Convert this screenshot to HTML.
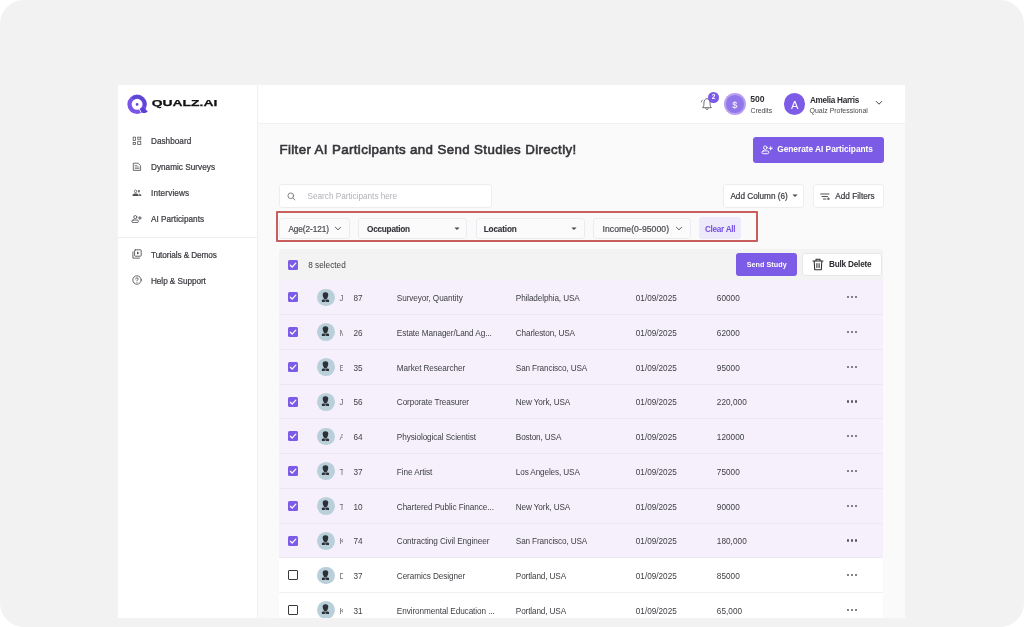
<!DOCTYPE html>
<html lang="en">
<head>
<meta charset="utf-8">
<title>Qualz.AI - AI Participants</title>
<style>
*{box-sizing:border-box;margin:0;padding:0}
html,body{width:1024px;height:627px;overflow:hidden;background:#fff}
body{font-family:"Liberation Sans",sans-serif;color:#3a3a3f;font-size:8.2px}
.stage{position:absolute;left:0;top:0;width:1024px;height:627px;background:#f2f2f2;border-radius:24px;overflow:hidden}
.app{position:absolute;left:118px;top:85px;width:787.4px;height:533px;background:#fafafa;overflow:hidden}
.o{position:absolute;left:-118px;top:-85px;width:1024px;height:627px;will-change:transform}
.side{position:absolute;left:118px;top:85px;width:139.7px;height:533px;background:#fff;border-right:1px solid #f0f0f0}
.top{position:absolute;left:257.7px;top:85px;width:648px;height:38.8px;background:#fff;border-bottom:1px solid #f0f0f0}
.abs{position:absolute}
.sdiv{position:absolute;left:118px;top:236.6px;width:139px;height:1px;background:#efefef}
h1{position:absolute;font-weight:700;color:#34343a;line-height:16px;white-space:nowrap}
.btn{position:absolute;border-radius:3px;white-space:nowrap}
.box{position:absolute;background:#fff;border:1px solid #ededf0;border-radius:3px}
.pill{position:absolute;background:#fbfbfb;border:1px solid #ececf0;border-radius:3px}
.t{position:absolute;white-space:nowrap;line-height:10px}
.row{position:absolute;left:279.2px;width:604.3px}
.row.sel{background:#f5f0fc;border-bottom:1px solid #ece7f3}
.row.un{background:#fff;border-bottom:1px solid #f1f1f1}
.cb{position:absolute;width:10px;height:10px;border-radius:1.5px;background:#7c5be6}
.cb svg{position:absolute;left:0;top:0}
.cb.off{background:#fff;border:1.2px solid #3a3a3f;border-radius:1px}
.av{position:absolute;width:17.8px;height:17.8px;border-radius:50%;background:#b9d0db;overflow:hidden}
.dot{position:absolute;width:2.1px;height:2.1px;border-radius:50%;background:#5a5a60}
</style>
</head>
<body>
<div class="stage">
<div class="app"><div class="o">
<div class="side"></div>
<div class="top"></div>
<div class="sdiv"></div>
<svg class="abs" style="left:125px;top:92px" width="26" height="24" viewBox="0 0 26 24">
<circle cx="12.1" cy="12.3" r="7.6" fill="none" stroke="#7b55e8" stroke-width="4.3"/>
<path d="M7.9 6.4 A7.4 7.4 0 0 1 19.3 14.6" fill="none" stroke="#5c46d2" stroke-width="3.4"/>
<path d="M14.8 16.7 L18.2 14.8 L22.8 19.500 L20.400 21 L17.500 20.900 Z" fill="#5a3fd6"/>
<path d="M13.900 16.100 L16.200 20.800" stroke="#fff" stroke-width="0.8" fill="none"/>
<circle cx="12.1" cy="12.4" r="1.35" fill="#6b41e0"/>
</svg>
<svg class="abs" style="left:150px;top:96px" width="72" height="16" viewBox="0 0 72 16">
<text x="1.7" y="10.4" font-family="Liberation Sans, sans-serif" font-weight="700" font-size="9.2" fill="#131316" stroke="#131316" stroke-width="0.25" textLength="65.6" lengthAdjust="spacingAndGlyphs">QUALZ.AI</text>
</svg>
<svg class="abs" style="left:132px;top:136px" width="10" height="10" viewBox="0 0 10 10" ><g fill="none" stroke="#4b4b52" stroke-width="0.75"><rect x="1.15" y="1.15" width="2.4" height="3.3"/><rect x="5.75" y="1.15" width="3.05" height="2.1"/><rect x="1.15" y="6.45" width="2.4" height="2.1"/><rect x="5.75" y="5.25" width="3.05" height="3.3"/></g></svg>
<svg class="abs" style="left:132px;top:162px" width="10" height="10" viewBox="0 0 10 10" ><g fill="none" stroke="#4b4b52" stroke-width="0.85" stroke-linejoin="round" stroke-linecap="round"><path d="M1.7 1.2h4.3l2.6 2.5v4.7h-6.9z" stroke-width="0.8"/><path d="M3.1 3.6h1.9M3.1 5.1h4M3.1 6.6h4" stroke-width="0.65"/></g></svg>
<svg class="abs" style="left:132px;top:189px" width="10" height="8" viewBox="0 0 10 8" ><circle cx="3.6" cy="2.3" r="1.25" fill="none" stroke="#505057" stroke-width="0.75"/><path d="M6.2 1h1.5v2.1l-0.75 0.7-0.75-0.7z" fill="#505057"/><path d="M0.5 7.1v-0.7c0-1.2 1.5-1.8 3.1-1.8s3.1 0.6 3.1 1.8v0.7z" fill="#505057"/><path d="M6.9 4.7c1.3 0.1 2.4 0.7 2.4 1.7v0.7h-1.9v-0.7c0-0.7-0.2-1.2-0.5-1.700z" fill="#505057"/></svg>
<svg class="abs" style="left:131.4px;top:215px" width="11" height="8.4" viewBox="0 0 11 8.4" ><g fill="none" stroke="#4b4b52" stroke-width="0.85" stroke-linejoin="round" stroke-linecap="round"><circle cx="4.3" cy="2.1" r="1.55"/><rect x="0.85" y="5.05" width="6.5" height="2.55" rx="1.25"/><path d="M8.9 1.6v2.800M7.500 3h2.800" stroke-width="0.95"/></g></svg>
<svg class="abs" style="left:131.6px;top:249px" width="10" height="10" viewBox="0 0 10 10" ><g fill="none" stroke="#4b4b52" stroke-width="0.85" stroke-linejoin="round" stroke-linecap="round"><rect x="2.6" y="0.8" width="6.6" height="6.4" rx="0.7"/><path d="M0.9 2.8v6.300h6.600"/></g><path d="M5 2.500l2.300 1.500-2.300 1.500z" fill="#4b4b52"/></svg>
<svg class="abs" style="left:131.6px;top:275.3px" width="10" height="10" viewBox="0 0 10 10" ><g fill="none" stroke="#4b4b52" stroke-width="0.85" stroke-linejoin="round" stroke-linecap="round"><circle cx="5" cy="5" r="4.200"/><path d="M3.800 4c0-0.800 0.500-1.200 1.200-1.200s1.200 0.500 1.200 1.100c0 0.900-1.200 0.900-1.200 1.900" stroke-width="0.85"/></g><circle cx="5" cy="7.300" r="0.500" fill="#4b4b52"/></svg>
<div class="t" style="left:151.00px;top:136.75px;font-size:8.2px;color:#3b3b41;letter-spacing:0.02px;-webkit-text-stroke:0.22px currentColor;">Dashboard</div>
<div class="t" style="left:151.00px;top:162.75px;font-size:8.2px;color:#3b3b41;letter-spacing:0.02px;-webkit-text-stroke:0.22px currentColor;">Dynamic Surveys</div>
<div class="t" style="left:151.00px;top:188.75px;font-size:8.2px;color:#3b3b41;letter-spacing:0.15px;-webkit-text-stroke:0.22px currentColor;">Interviews</div>
<div class="t" style="left:151.00px;top:214.75px;font-size:8.2px;color:#3b3b41;letter-spacing:0.02px;-webkit-text-stroke:0.22px currentColor;">AI Participants</div>
<div class="t" style="left:151.00px;top:250.75px;font-size:8.2px;color:#3b3b41;letter-spacing:-0.07px;-webkit-text-stroke:0.22px currentColor;">Tutorials &amp; Demos</div>
<div class="t" style="left:151.00px;top:276.75px;font-size:8.2px;color:#3b3b41;letter-spacing:-0.05px;-webkit-text-stroke:0.22px currentColor;">Help &amp; Support</div>
<svg class="abs" style="left:699px;top:96px" width="14" height="15" viewBox="0 0 14 15" ><g fill="none" stroke="#45454b" stroke-width="0.8" stroke-linecap="round" stroke-linejoin="round"><path d="M3.900 11.400c1-1.100 1-2.600 1-4.200 0-2.700 1.300-4.500 3.100-4.500s3.100 1.800 3.100 4.500c0 1.600 0 3.100 1 4.200z"/><path d="M6.800 12.500c0.200 0.700 0.600 1.100 1.200 1.100s1-0.400 1.200-1.100"/><path d="M2.300 6c0.200-0.800 0.600-1.500 1.200-2" stroke-width="0.65"/></g></svg>
<div class="abs" style="left:708.2px;top:92.4px;width:10.6px;height:10.6px;border-radius:50%;background:#7c5be6;color:#fff;font-size:6.6px;font-weight:700;line-height:10.6px;text-align:center">2</div>
<div class="abs" style="left:724.1px;top:93.2px;width:21.8px;height:21.8px;border-radius:50%;background:#b7a1f1"></div>
<div class="abs" style="left:726.3px;top:95.4px;width:17.4px;height:17.4px;border-radius:50%;background:#9277ea"></div>
<div class="t" style="left:732.30px;top:100.25px;font-size:9.2px;color:#fff;">$</div>
<div class="t" style="left:750.30px;top:94.25px;font-size:8.6px;color:#2e2e33;font-weight:700;">500</div>
<div class="t" style="left:750.40px;top:105.75px;font-size:7px;color:#4a4a50;letter-spacing:-0.05px;">Credits</div>
<div class="abs" style="left:783.5px;top:93.4px;width:21.6px;height:21.6px;border-radius:50%;background:#7c5be6"></div>
<div class="t" style="left:790.90px;top:99.65px;font-size:11.2px;color:#fff;">A</div>
<div class="t" style="left:810.00px;top:95.75px;font-size:8.2px;color:#2b2b30;font-weight:700;letter-spacing:-0.3px;">Amelia Harris</div>
<div class="t" style="left:809.60px;top:105.75px;font-size:7px;color:#4a4a50;letter-spacing:-0.03px;">Qualz Professional</div>
<svg class="abs" style="left:874.5px;top:99.5px" width="8" height="6" viewBox="0 0 8 6" ><path d="M1.2 1.4L4 4.200L6.800 1.400" fill="none" stroke="#3a3a40" stroke-width="0.95" stroke-linecap="round" stroke-linejoin="round"/></svg>
<h1 style="left:279.4px;top:141.5px;font-size:13.3px;font-weight:400;-webkit-text-stroke:0.6px currentColor;letter-spacing:0.38px">Filter AI Participants and Send Studies Directly!</h1>
<div class="btn" style="left:752.60px;top:137.00px;width:131.40px;height:25.60px;background:#7c5be6"></div>
<svg class="abs" style="left:761.4px;top:144.6px" width="12" height="10" viewBox="0 0 12 10" ><g fill="none" stroke="#fff" stroke-width="0.95" stroke-linejoin="round" stroke-linecap="round"><circle cx="4.300" cy="2.700" r="1.750"/><rect x="0.900" y="5.900" width="6.900" height="2.800" rx="1.400"/><path d="M9.700 1.700v3.200M8.100 3.300h3.200" stroke-width="1"/></g></svg>
<div class="t" style="left:777.20px;top:144.25px;font-size:8.4px;color:#fff;font-weight:700;letter-spacing:-0.05px;">Generate AI Participants</div>
<div class="box" style="left:279.40px;top:184.30px;width:212.40px;height:23.30px;"></div>
<svg class="abs" style="left:286.6px;top:191.8px" width="9" height="9" viewBox="0 0 9 9" ><g fill="none" stroke="#6e6e75" stroke-width="0.85" stroke-linecap="round"><circle cx="3.800" cy="3.800" r="2.850"/><path d="M6 6L7.900 7.900"/></g></svg>
<div class="t" style="left:307.50px;top:191.75px;font-size:8.2px;color:#b3b0b8;letter-spacing:0px;">Search Participants here</div>
<div class="box" style="left:722.90px;top:184.30px;width:80.80px;height:23.30px;"></div>
<div class="t" style="left:730.40px;top:191.75px;font-size:8.2px;color:#3d3d42;letter-spacing:0px;-webkit-text-stroke:0.22px currentColor;">Add Column (6)</div>
<svg class="abs" style="left:791.6px;top:194.3px" width="6" height="4" viewBox="0 0 6 4" ><path d="M0.400 0.400h5.200L3 3.100z" fill="#4a4a50"/></svg>
<div class="box" style="left:813.10px;top:184.30px;width:70.60px;height:23.30px;"></div>
<svg class="abs" style="left:820.4px;top:192.9px" width="10.5" height="7.5" viewBox="0 0 10.5 7.5" ><g fill="none" stroke="#3d3d42" stroke-width="0.9" stroke-linecap="round"><path d="M0.700 1h8.300M2 3.500h5.400M3.400 6h2.300"/><path d="M8.300 4.600v2.600M7 5.900h2.600" stroke-width="0.75"/></g></svg>
<div class="t" style="left:835.30px;top:191.75px;font-size:8.2px;color:#3d3d42;letter-spacing:0.02px;-webkit-text-stroke:0.22px currentColor;">Add Filters</div>
<div class="abs" style="left:276.2px;top:211.1px;width:481.7px;height:31.1px;border:2.1px solid #c85d5d;border-radius:1px"></div>
<div class="pill" style="left:279.30px;top:217.80px;width:70.50px;height:20.90px;"></div>
<div class="t" style="left:288.40px;top:224.75px;font-size:8.2px;color:#4c4c53;letter-spacing:-0.05px;-webkit-text-stroke:0.22px currentColor;">Age(2-121)</div>
<svg class="abs" style="left:333.7px;top:226.2px" width="8" height="6" viewBox="0 0 8 6" ><path d="M1.400 1.300L4 3.800L6.600 1.300" fill="none" stroke="#4a4a50" stroke-width="0.9" stroke-linecap="round" stroke-linejoin="round"/></svg>
<div class="pill" style="left:358.40px;top:217.80px;width:109.00px;height:20.90px;"></div>
<div class="t" style="left:367.00px;top:224.75px;font-size:8.2px;color:#35353b;font-weight:700;letter-spacing:-0.22px;-webkit-text-stroke:0.12px currentColor;">Occupation</div>
<svg class="abs" style="left:453.8px;top:226.9px" width="6" height="4" viewBox="0 0 6 4" ><path d="M0.400 0.400h5.200L3 3.100z" fill="#4a4a50"/></svg>
<div class="pill" style="left:476.00px;top:217.80px;width:108.50px;height:20.90px;"></div>
<div class="t" style="left:483.70px;top:224.75px;font-size:8.2px;color:#35353b;font-weight:700;letter-spacing:-0.15px;-webkit-text-stroke:0.12px currentColor;">Location</div>
<svg class="abs" style="left:570.9px;top:226.9px" width="6" height="4" viewBox="0 0 6 4" ><path d="M0.400 0.400h5.200L3 3.100z" fill="#4a4a50"/></svg>
<div class="pill" style="left:593.20px;top:217.80px;width:97.70px;height:20.90px;"></div>
<div class="t" style="left:602.50px;top:224.25px;font-size:8.6px;color:#4c4c53;letter-spacing:0.08px;-webkit-text-stroke:0.22px currentColor;">Income(0-95000)</div>
<svg class="abs" style="left:674.6px;top:226.2px" width="8" height="6" viewBox="0 0 8 6" ><path d="M1.400 1.300L4 3.800L6.600 1.300" fill="none" stroke="#4a4a50" stroke-width="0.9" stroke-linecap="round" stroke-linejoin="round"/></svg>
<div class="btn" style="left:699.30px;top:217.30px;width:41.50px;height:22.00px;background:#efe9fc"></div>
<div class="t" style="left:705.00px;top:224.75px;font-size:8.2px;color:#7350e2;font-weight:700;letter-spacing:-0.3px;">Clear All</div>
<div class="abs" style="left:279.20px;top:249.20px;width:604.30px;height:31.30px;background:#f3f3f3;border-radius:3px 3px 0 0"></div>
<div class="cb" style="left:288px;top:259.6px"><svg width="10" height="10" viewBox="0 0 10 10" fill="none" stroke="#fff" stroke-width="1.2" stroke-linecap="round" stroke-linejoin="round"><path d="M2.300 5.200L4.200 7L7.800 3.100"/></svg></div>
<div class="t" style="left:308.20px;top:260.75px;font-size:8.2px;color:#3d3d42;letter-spacing:0.02px;">8 selected</div>
<div class="btn" style="left:735.80px;top:253.00px;width:61.40px;height:23.00px;background:#7c5be6"></div>
<div class="t" style="left:746.70px;top:259.75px;font-size:7.2px;color:#fff;font-weight:700;letter-spacing:0.05px;">Send Study</div>
<div class="btn" style="left:801.70px;top:253.30px;width:79.90px;height:22.40px;background:#fff;border:1px solid #e7e7ea"></div>
<svg class="abs" style="left:812.3px;top:258.2px" width="12" height="13" viewBox="0 0 12 13" ><g fill="none" stroke="#2b2b30" stroke-width="1.05" stroke-linecap="round" stroke-linejoin="round"><path d="M1 3h10M4 3V1.200h4V3M2.200 3.200l0.500 8.600h6.600l0.500-8.600M4.900 5.600v3.800M7.100 5.600v3.800"/></g></svg>
<div class="t" style="left:829.00px;top:259.75px;font-size:8.2px;color:#2b2b30;font-weight:700;letter-spacing:-0.2px;">Bulk Delete</div>
<div class="row sel" style="top:280.40px;height:34.75px"></div>
<div class="cb" style="left:288px;top:292.30px"><svg width="10" height="10" viewBox="0 0 10 10" fill="none" stroke="#fff" stroke-width="1.2" stroke-linecap="round" stroke-linejoin="round"><path d="M2.300 5.200L4.200 7L7.800 3.100"/></svg></div>
<div class="av" style="left:317.3px;top:288.60px"><svg width="17.8" height="17.8" viewBox="0 0 18 18"><g transform="translate(-0.45 -0.1)"><path d="M6.200 5.700C6.200 4.100 7.400 3.300 9 3.300S11.800 4.100 11.800 5.700C11.800 7.700 10.900 9.400 10.200 10.300H7.800C7.100 9.400 6.200 7.700 6.200 5.700Z" fill="#2b3037"/><path d="M5.400 13.300V11.700C5.400 11 6.200 10.800 7 10.700H11C11.800 10.800 12.600 11 12.600 11.700V13.300Z" fill="#2b3037"/><path d="M8.300 10.900l0.700 1 0.700-1v2.400H8.300z" fill="#b9d0db" opacity=".55"/><path d="M7.300 4.700c0.500-0.500 1.100-0.700 1.700-0.700s1.200 0.200 1.700 0.700" stroke="#4a525b" stroke-width="0.5" fill="none"/></g></svg></div>
<div class="t" style="left:339.40px;top:293.75px;font-size:8.2px;color:#707076;width:3.8px;overflow:hidden;">J</div>
<div class="t" style="left:353.40px;top:293.75px;font-size:8.2px;color:#404046;letter-spacing:0.1px;">87</div>
<div class="t" style="left:396.80px;top:293.75px;font-size:8.2px;color:#404046;letter-spacing:-0.08px;">Surveyor, Quantity</div>
<div class="t" style="left:515.80px;top:293.75px;font-size:8.2px;color:#404046;letter-spacing:-0.13px;">Philadelphia, USA</div>
<div class="t" style="left:635.80px;top:293.75px;font-size:8.2px;color:#404046;letter-spacing:0px;">01/09/2025</div>
<div class="t" style="left:716.80px;top:293.75px;font-size:8.2px;color:#404046;letter-spacing:0.05px;">60000</div>
<div class="dot" style="left:847.30px;top:296.20px"></div>
<div class="dot" style="left:851.35px;top:296.20px"></div>
<div class="dot" style="left:855.40px;top:296.20px"></div>
<div class="row sel" style="top:315.15px;height:34.75px"></div>
<div class="cb" style="left:288px;top:327.05px"><svg width="10" height="10" viewBox="0 0 10 10" fill="none" stroke="#fff" stroke-width="1.2" stroke-linecap="round" stroke-linejoin="round"><path d="M2.300 5.200L4.200 7L7.800 3.100"/></svg></div>
<div class="av" style="left:317.3px;top:323.35px"><svg width="17.8" height="17.8" viewBox="0 0 18 18"><g transform="translate(-0.45 -0.1)"><path d="M6.200 5.700C6.200 4.100 7.400 3.300 9 3.300S11.800 4.100 11.800 5.700C11.800 7.700 10.900 9.400 10.200 10.300H7.800C7.100 9.400 6.200 7.700 6.200 5.700Z" fill="#2b3037"/><path d="M5.400 13.300V11.700C5.400 11 6.200 10.800 7 10.700H11C11.800 10.800 12.600 11 12.600 11.700V13.300Z" fill="#2b3037"/><path d="M8.300 10.900l0.700 1 0.700-1v2.400H8.300z" fill="#b9d0db" opacity=".55"/><path d="M7.300 4.700c0.500-0.500 1.100-0.700 1.700-0.700s1.200 0.200 1.700 0.700" stroke="#4a525b" stroke-width="0.5" fill="none"/></g></svg></div>
<div class="t" style="left:339.40px;top:328.75px;font-size:8.2px;color:#707076;width:3.8px;overflow:hidden;">M</div>
<div class="t" style="left:353.40px;top:328.75px;font-size:8.2px;color:#404046;letter-spacing:0.1px;">26</div>
<div class="t" style="left:396.80px;top:328.75px;font-size:8.2px;color:#404046;letter-spacing:-0.08px;">Estate Manager/Land Ag...</div>
<div class="t" style="left:515.80px;top:328.75px;font-size:8.2px;color:#404046;letter-spacing:-0.13px;">Charleston, USA</div>
<div class="t" style="left:635.80px;top:328.75px;font-size:8.2px;color:#404046;letter-spacing:0px;">01/09/2025</div>
<div class="t" style="left:716.80px;top:328.75px;font-size:8.2px;color:#404046;letter-spacing:0.05px;">62000</div>
<div class="dot" style="left:847.30px;top:330.95px"></div>
<div class="dot" style="left:851.35px;top:330.95px"></div>
<div class="dot" style="left:855.40px;top:330.95px"></div>
<div class="row sel" style="top:349.90px;height:34.75px"></div>
<div class="cb" style="left:288px;top:361.80px"><svg width="10" height="10" viewBox="0 0 10 10" fill="none" stroke="#fff" stroke-width="1.2" stroke-linecap="round" stroke-linejoin="round"><path d="M2.300 5.200L4.200 7L7.800 3.100"/></svg></div>
<div class="av" style="left:317.3px;top:358.10px"><svg width="17.8" height="17.8" viewBox="0 0 18 18"><g transform="translate(-0.45 -0.1)"><path d="M6.200 5.700C6.200 4.100 7.400 3.300 9 3.300S11.800 4.100 11.800 5.700C11.800 7.700 10.900 9.400 10.200 10.300H7.800C7.100 9.400 6.200 7.700 6.200 5.700Z" fill="#2b3037"/><path d="M5.400 13.300V11.700C5.400 11 6.200 10.800 7 10.700H11C11.800 10.800 12.600 11 12.600 11.700V13.300Z" fill="#2b3037"/><path d="M8.300 10.900l0.700 1 0.700-1v2.400H8.300z" fill="#b9d0db" opacity=".55"/><path d="M7.300 4.700c0.500-0.500 1.100-0.700 1.700-0.700s1.200 0.200 1.700 0.700" stroke="#4a525b" stroke-width="0.5" fill="none"/></g></svg></div>
<div class="t" style="left:339.40px;top:363.75px;font-size:8.2px;color:#707076;width:3.8px;overflow:hidden;">E</div>
<div class="t" style="left:353.40px;top:363.75px;font-size:8.2px;color:#404046;letter-spacing:0.1px;">35</div>
<div class="t" style="left:396.80px;top:363.75px;font-size:8.2px;color:#404046;letter-spacing:-0.08px;">Market Researcher</div>
<div class="t" style="left:515.80px;top:363.75px;font-size:8.2px;color:#404046;letter-spacing:-0.13px;">San Francisco, USA</div>
<div class="t" style="left:635.80px;top:363.75px;font-size:8.2px;color:#404046;letter-spacing:0px;">01/09/2025</div>
<div class="t" style="left:716.80px;top:363.75px;font-size:8.2px;color:#404046;letter-spacing:0.05px;">95000</div>
<div class="dot" style="left:847.30px;top:365.70px"></div>
<div class="dot" style="left:851.35px;top:365.70px"></div>
<div class="dot" style="left:855.40px;top:365.70px"></div>
<div class="row sel" style="top:384.65px;height:34.75px"></div>
<div class="cb" style="left:288px;top:396.55px"><svg width="10" height="10" viewBox="0 0 10 10" fill="none" stroke="#fff" stroke-width="1.2" stroke-linecap="round" stroke-linejoin="round"><path d="M2.300 5.200L4.200 7L7.800 3.100"/></svg></div>
<div class="av" style="left:317.3px;top:392.85px"><svg width="17.8" height="17.8" viewBox="0 0 18 18"><g transform="translate(-0.45 -0.1)"><path d="M6.200 5.700C6.200 4.100 7.400 3.300 9 3.300S11.800 4.100 11.800 5.700C11.800 7.700 10.900 9.400 10.200 10.300H7.800C7.100 9.400 6.200 7.700 6.200 5.700Z" fill="#2b3037"/><path d="M5.400 13.300V11.700C5.400 11 6.200 10.800 7 10.700H11C11.800 10.800 12.600 11 12.600 11.700V13.300Z" fill="#2b3037"/><path d="M8.300 10.900l0.700 1 0.700-1v2.400H8.300z" fill="#b9d0db" opacity=".55"/><path d="M7.300 4.700c0.500-0.500 1.100-0.700 1.700-0.700s1.200 0.200 1.700 0.700" stroke="#4a525b" stroke-width="0.5" fill="none"/></g></svg></div>
<div class="t" style="left:339.40px;top:397.75px;font-size:8.2px;color:#707076;width:3.8px;overflow:hidden;">J</div>
<div class="t" style="left:353.40px;top:397.75px;font-size:8.2px;color:#404046;letter-spacing:0.1px;">56</div>
<div class="t" style="left:396.80px;top:397.75px;font-size:8.2px;color:#404046;letter-spacing:-0.08px;">Corporate Treasurer</div>
<div class="t" style="left:515.80px;top:397.75px;font-size:8.2px;color:#404046;letter-spacing:-0.13px;">New York, USA</div>
<div class="t" style="left:635.80px;top:397.75px;font-size:8.2px;color:#404046;letter-spacing:0px;">01/09/2025</div>
<div class="t" style="left:716.80px;top:397.75px;font-size:8.2px;color:#404046;letter-spacing:0.05px;">220,000</div>
<div class="dot" style="left:847.30px;top:400.45px"></div>
<div class="dot" style="left:851.35px;top:400.45px"></div>
<div class="dot" style="left:855.40px;top:400.45px"></div>
<div class="row sel" style="top:419.40px;height:34.75px"></div>
<div class="cb" style="left:288px;top:431.30px"><svg width="10" height="10" viewBox="0 0 10 10" fill="none" stroke="#fff" stroke-width="1.2" stroke-linecap="round" stroke-linejoin="round"><path d="M2.300 5.200L4.200 7L7.800 3.100"/></svg></div>
<div class="av" style="left:317.3px;top:427.60px"><svg width="17.8" height="17.8" viewBox="0 0 18 18"><g transform="translate(-0.45 -0.1)"><path d="M6.200 5.700C6.200 4.100 7.400 3.300 9 3.300S11.800 4.100 11.800 5.700C11.800 7.700 10.900 9.400 10.200 10.300H7.800C7.100 9.400 6.200 7.700 6.200 5.700Z" fill="#2b3037"/><path d="M5.400 13.300V11.700C5.400 11 6.200 10.800 7 10.700H11C11.800 10.800 12.600 11 12.600 11.700V13.300Z" fill="#2b3037"/><path d="M8.300 10.900l0.700 1 0.700-1v2.400H8.300z" fill="#b9d0db" opacity=".55"/><path d="M7.300 4.700c0.500-0.500 1.100-0.700 1.700-0.700s1.200 0.200 1.700 0.700" stroke="#4a525b" stroke-width="0.5" fill="none"/></g></svg></div>
<div class="t" style="left:339.40px;top:432.75px;font-size:8.2px;color:#707076;width:3.8px;overflow:hidden;">A</div>
<div class="t" style="left:353.40px;top:432.75px;font-size:8.2px;color:#404046;letter-spacing:0.1px;">64</div>
<div class="t" style="left:396.80px;top:432.75px;font-size:8.2px;color:#404046;letter-spacing:-0.08px;">Physiological Scientist</div>
<div class="t" style="left:515.80px;top:432.75px;font-size:8.2px;color:#404046;letter-spacing:-0.13px;">Boston, USA</div>
<div class="t" style="left:635.80px;top:432.75px;font-size:8.2px;color:#404046;letter-spacing:0px;">01/09/2025</div>
<div class="t" style="left:716.80px;top:432.75px;font-size:8.2px;color:#404046;letter-spacing:0.05px;">120000</div>
<div class="dot" style="left:847.30px;top:435.20px"></div>
<div class="dot" style="left:851.35px;top:435.20px"></div>
<div class="dot" style="left:855.40px;top:435.20px"></div>
<div class="row sel" style="top:454.15px;height:34.75px"></div>
<div class="cb" style="left:288px;top:466.05px"><svg width="10" height="10" viewBox="0 0 10 10" fill="none" stroke="#fff" stroke-width="1.2" stroke-linecap="round" stroke-linejoin="round"><path d="M2.300 5.200L4.200 7L7.800 3.100"/></svg></div>
<div class="av" style="left:317.3px;top:462.35px"><svg width="17.8" height="17.8" viewBox="0 0 18 18"><g transform="translate(-0.45 -0.1)"><path d="M6.200 5.700C6.200 4.100 7.400 3.300 9 3.300S11.800 4.100 11.800 5.700C11.800 7.700 10.900 9.400 10.200 10.300H7.800C7.100 9.400 6.200 7.700 6.200 5.700Z" fill="#2b3037"/><path d="M5.400 13.300V11.700C5.400 11 6.200 10.800 7 10.700H11C11.800 10.800 12.600 11 12.600 11.700V13.300Z" fill="#2b3037"/><path d="M8.300 10.900l0.700 1 0.700-1v2.400H8.300z" fill="#b9d0db" opacity=".55"/><path d="M7.300 4.700c0.500-0.500 1.100-0.700 1.700-0.700s1.200 0.200 1.700 0.700" stroke="#4a525b" stroke-width="0.5" fill="none"/></g></svg></div>
<div class="t" style="left:339.40px;top:467.75px;font-size:8.2px;color:#707076;width:3.8px;overflow:hidden;">T</div>
<div class="t" style="left:353.40px;top:467.75px;font-size:8.2px;color:#404046;letter-spacing:0.1px;">37</div>
<div class="t" style="left:396.80px;top:467.75px;font-size:8.2px;color:#404046;letter-spacing:-0.08px;">Fine Artist</div>
<div class="t" style="left:515.80px;top:467.75px;font-size:8.2px;color:#404046;letter-spacing:-0.13px;">Los Angeles, USA</div>
<div class="t" style="left:635.80px;top:467.75px;font-size:8.2px;color:#404046;letter-spacing:0px;">01/09/2025</div>
<div class="t" style="left:716.80px;top:467.75px;font-size:8.2px;color:#404046;letter-spacing:0.05px;">75000</div>
<div class="dot" style="left:847.30px;top:469.95px"></div>
<div class="dot" style="left:851.35px;top:469.95px"></div>
<div class="dot" style="left:855.40px;top:469.95px"></div>
<div class="row sel" style="top:488.90px;height:34.75px"></div>
<div class="cb" style="left:288px;top:500.80px"><svg width="10" height="10" viewBox="0 0 10 10" fill="none" stroke="#fff" stroke-width="1.2" stroke-linecap="round" stroke-linejoin="round"><path d="M2.300 5.200L4.200 7L7.800 3.100"/></svg></div>
<div class="av" style="left:317.3px;top:497.10px"><svg width="17.8" height="17.8" viewBox="0 0 18 18"><g transform="translate(-0.45 -0.1)"><path d="M6.200 5.700C6.200 4.100 7.400 3.300 9 3.300S11.800 4.100 11.800 5.700C11.800 7.700 10.900 9.400 10.200 10.300H7.800C7.100 9.400 6.200 7.700 6.200 5.700Z" fill="#2b3037"/><path d="M5.400 13.300V11.700C5.400 11 6.200 10.800 7 10.700H11C11.800 10.800 12.600 11 12.600 11.700V13.300Z" fill="#2b3037"/><path d="M8.300 10.900l0.700 1 0.700-1v2.400H8.300z" fill="#b9d0db" opacity=".55"/><path d="M7.300 4.700c0.500-0.500 1.100-0.700 1.700-0.700s1.200 0.200 1.700 0.700" stroke="#4a525b" stroke-width="0.5" fill="none"/></g></svg></div>
<div class="t" style="left:339.40px;top:502.75px;font-size:8.2px;color:#707076;width:3.8px;overflow:hidden;">T</div>
<div class="t" style="left:353.40px;top:502.75px;font-size:8.2px;color:#404046;letter-spacing:0.1px;">10</div>
<div class="t" style="left:396.80px;top:502.75px;font-size:8.2px;color:#404046;letter-spacing:-0.08px;">Chartered Public Finance...</div>
<div class="t" style="left:515.80px;top:502.75px;font-size:8.2px;color:#404046;letter-spacing:-0.13px;">New York, USA</div>
<div class="t" style="left:635.80px;top:502.75px;font-size:8.2px;color:#404046;letter-spacing:0px;">01/09/2025</div>
<div class="t" style="left:716.80px;top:502.75px;font-size:8.2px;color:#404046;letter-spacing:0.05px;">90000</div>
<div class="dot" style="left:847.30px;top:504.70px"></div>
<div class="dot" style="left:851.35px;top:504.70px"></div>
<div class="dot" style="left:855.40px;top:504.70px"></div>
<div class="row sel" style="top:523.65px;height:34.75px"></div>
<div class="cb" style="left:288px;top:535.55px"><svg width="10" height="10" viewBox="0 0 10 10" fill="none" stroke="#fff" stroke-width="1.2" stroke-linecap="round" stroke-linejoin="round"><path d="M2.300 5.200L4.200 7L7.800 3.100"/></svg></div>
<div class="av" style="left:317.3px;top:531.85px"><svg width="17.8" height="17.8" viewBox="0 0 18 18"><g transform="translate(-0.45 -0.1)"><path d="M6.200 5.700C6.200 4.100 7.400 3.300 9 3.300S11.800 4.100 11.800 5.700C11.800 7.700 10.900 9.400 10.200 10.300H7.800C7.100 9.400 6.200 7.700 6.200 5.700Z" fill="#2b3037"/><path d="M5.400 13.300V11.700C5.400 11 6.200 10.800 7 10.700H11C11.800 10.800 12.600 11 12.600 11.700V13.300Z" fill="#2b3037"/><path d="M8.300 10.900l0.700 1 0.700-1v2.400H8.300z" fill="#b9d0db" opacity=".55"/><path d="M7.300 4.700c0.500-0.500 1.100-0.700 1.700-0.700s1.200 0.200 1.700 0.700" stroke="#4a525b" stroke-width="0.5" fill="none"/></g></svg></div>
<div class="t" style="left:339.40px;top:536.75px;font-size:8.2px;color:#707076;width:3.8px;overflow:hidden;">K</div>
<div class="t" style="left:353.40px;top:536.75px;font-size:8.2px;color:#404046;letter-spacing:0.1px;">74</div>
<div class="t" style="left:396.80px;top:536.75px;font-size:8.2px;color:#404046;letter-spacing:-0.08px;">Contracting Civil Engineer</div>
<div class="t" style="left:515.80px;top:536.75px;font-size:8.2px;color:#404046;letter-spacing:-0.13px;">San Francisco, USA</div>
<div class="t" style="left:635.80px;top:536.75px;font-size:8.2px;color:#404046;letter-spacing:0px;">01/09/2025</div>
<div class="t" style="left:716.80px;top:536.75px;font-size:8.2px;color:#404046;letter-spacing:0.05px;">180,000</div>
<div class="dot" style="left:847.30px;top:539.45px"></div>
<div class="dot" style="left:851.35px;top:539.45px"></div>
<div class="dot" style="left:855.40px;top:539.45px"></div>
<div class="row un" style="top:558.40px;height:34.75px"></div>
<div class="cb off" style="left:288px;top:570.30px"></div>
<div class="av" style="left:317.3px;top:566.60px"><svg width="17.8" height="17.8" viewBox="0 0 18 18"><g transform="translate(-0.45 -0.1)"><path d="M6.200 5.700C6.200 4.100 7.400 3.300 9 3.300S11.800 4.100 11.800 5.700C11.800 7.700 10.900 9.400 10.200 10.300H7.800C7.100 9.400 6.200 7.700 6.200 5.700Z" fill="#2b3037"/><path d="M5.400 13.300V11.700C5.400 11 6.200 10.800 7 10.700H11C11.800 10.800 12.600 11 12.600 11.700V13.300Z" fill="#2b3037"/><path d="M8.300 10.900l0.700 1 0.700-1v2.400H8.300z" fill="#b9d0db" opacity=".55"/><path d="M7.300 4.700c0.500-0.500 1.100-0.700 1.700-0.700s1.200 0.200 1.700 0.700" stroke="#4a525b" stroke-width="0.5" fill="none"/></g></svg></div>
<div class="t" style="left:339.40px;top:571.75px;font-size:8.2px;color:#707076;width:3.8px;overflow:hidden;">D</div>
<div class="t" style="left:353.40px;top:571.75px;font-size:8.2px;color:#404046;letter-spacing:0.1px;">37</div>
<div class="t" style="left:396.80px;top:571.75px;font-size:8.2px;color:#404046;letter-spacing:-0.08px;">Ceramics Designer</div>
<div class="t" style="left:515.80px;top:571.75px;font-size:8.2px;color:#404046;letter-spacing:-0.13px;">Portland, USA</div>
<div class="t" style="left:635.80px;top:571.75px;font-size:8.2px;color:#404046;letter-spacing:0px;">01/09/2025</div>
<div class="t" style="left:716.80px;top:571.75px;font-size:8.2px;color:#404046;letter-spacing:0.05px;">85000</div>
<div class="dot" style="left:847.30px;top:574.20px"></div>
<div class="dot" style="left:851.35px;top:574.20px"></div>
<div class="dot" style="left:855.40px;top:574.20px"></div>
<div class="row un" style="top:593.15px;height:34.75px"></div>
<div class="cb off" style="left:288px;top:605.05px"></div>
<div class="av" style="left:317.3px;top:601.35px"><svg width="17.8" height="17.8" viewBox="0 0 18 18"><g transform="translate(-0.45 -0.1)"><path d="M6.200 5.700C6.200 4.100 7.400 3.300 9 3.300S11.800 4.100 11.800 5.700C11.800 7.700 10.900 9.400 10.200 10.300H7.800C7.100 9.400 6.200 7.700 6.200 5.700Z" fill="#2b3037"/><path d="M5.400 13.300V11.700C5.400 11 6.200 10.800 7 10.700H11C11.800 10.800 12.600 11 12.600 11.700V13.300Z" fill="#2b3037"/><path d="M8.300 10.900l0.700 1 0.700-1v2.400H8.300z" fill="#b9d0db" opacity=".55"/><path d="M7.300 4.700c0.500-0.500 1.100-0.700 1.700-0.700s1.200 0.200 1.700 0.700" stroke="#4a525b" stroke-width="0.5" fill="none"/></g></svg></div>
<div class="t" style="left:339.40px;top:606.75px;font-size:8.2px;color:#707076;width:3.8px;overflow:hidden;">K</div>
<div class="t" style="left:353.40px;top:606.75px;font-size:8.2px;color:#404046;letter-spacing:0.1px;">31</div>
<div class="t" style="left:396.80px;top:606.75px;font-size:8.2px;color:#404046;letter-spacing:-0.08px;">Environmental Education ...</div>
<div class="t" style="left:515.80px;top:606.75px;font-size:8.2px;color:#404046;letter-spacing:-0.13px;">Portland, USA</div>
<div class="t" style="left:635.80px;top:606.75px;font-size:8.2px;color:#404046;letter-spacing:0px;">01/09/2025</div>
<div class="t" style="left:716.80px;top:606.75px;font-size:8.2px;color:#404046;letter-spacing:0.05px;">65,000</div>
<div class="dot" style="left:847.30px;top:608.95px"></div>
<div class="dot" style="left:851.35px;top:608.95px"></div>
<div class="dot" style="left:855.40px;top:608.95px"></div>
</div></div>
</div>
</body>
</html>
